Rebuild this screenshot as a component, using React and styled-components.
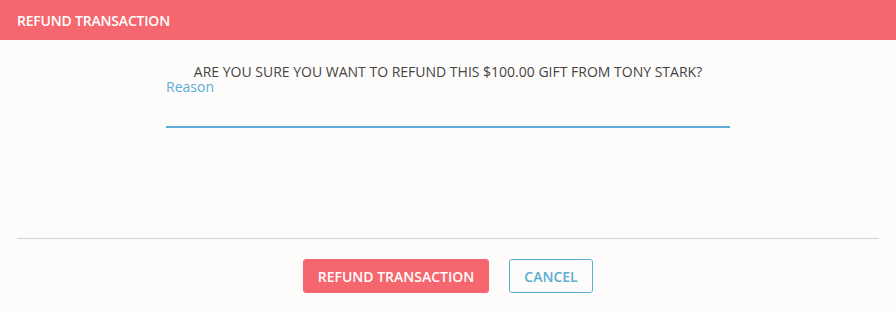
import React from "react";
import styled, { createGlobalStyle } from "styled-components";

const Global = createGlobalStyle`
  html, body { margin: 0; padding: 0; background: #fdfcfb; }
  body { font-family: "Open Sans", "Liberation Sans", sans-serif; }
  * { box-sizing: border-box; }
`;

const Modal = styled.div`
  width: 896px;
  height: 311px;
  background: #fdfcfb;
  display: flex;
  flex-direction: column;
`;

const Header = styled.div`
  height: 40px;
  background: #f6666e;
  color: #fff;
  display: flex;
  align-items: center;
  padding-left: 17px;
  font-size: 14px;
  font-weight: 600;
  letter-spacing: -0.2px;
`;

const Body = styled.div`
  height: 198px;
  padding-top: 24px;
  display: flex;
  justify-content: center;
`;

const Form = styled.div`
  width: 564px;
  display: flex;
  flex-direction: column;
`;

const Question = styled.p`
  margin: 0;
  font-size: 14px;
  line-height: 15px;
  color: #444;
  text-align: center;
  text-transform: uppercase;
  white-space: nowrap;
`;

const Label = styled.label`
  font-size: 14px;
  line-height: 16px;
  font-weight: 400;
  color: #5badd4;
`;

const Input = styled.input`
  height: 33px;
  border: none;
  border-bottom: 2px solid #5badd4;
  background: transparent;
  outline: none;
  font-family: inherit;
  font-size: 14px;
  padding: 0;
`;

const Footer = styled.div`
  margin: 0 17px;
  border-top: 1px solid #d2d2d2;
  padding-top: 20px;
  display: flex;
  justify-content: center;
  gap: 20px;
`;

const Button = styled.button`
  height: 34px;
  padding: 0;
  border-radius: 3px;
  font-family: "Open Sans", "Liberation Sans", sans-serif;
  font-size: 14px;
  font-weight: 600;
  white-space: nowrap;
  cursor: pointer;
  border: 1px solid ${(p) => (p.$primary ? "#f6666e" : "#5badd4")};
  background: ${(p) => (p.$primary ? "#f6666e" : "transparent")};
  color: ${(p) => (p.$primary ? "#fff" : "#5badd4")};
  width: ${(p) => p.$w}px;
`;

export default function App() {
  return (
    <>
      <Global />
      <Modal>
        <Header>REFUND TRANSACTION</Header>
        <Body>
          <Form>
            <Question>Are you sure you want to refund this $100.00 gift from Tony Stark?</Question>
            <Label htmlFor="reason">Reason</Label>
            <Input id="reason" />
          </Form>
        </Body>
        <Footer>
          <Button $primary $w={186}>REFUND TRANSACTION</Button>
          <Button $w={84}>CANCEL</Button>
        </Footer>
      </Modal>
    </>
  );
}
